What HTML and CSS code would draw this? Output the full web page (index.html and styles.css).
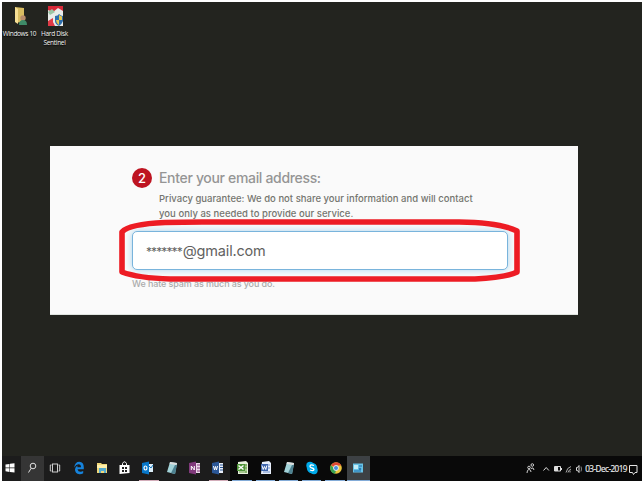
FILE: index.html
```html
<!DOCTYPE html>
<html lang="en">
<head>
<meta charset="utf-8">
<title>Desktop</title>
<link rel="stylesheet" href="styles.css">
</head>
<body>
<div class="desktop">
  <div class="shortcuts">
    <div class="shortcut"><svg width="22" height="22" viewBox="0 0 22 22"><path d="M6 2l9 1v15l-9-1z" fill="#d9bd62"/><path d="M6 2l3 2v15l-3-2z" fill="#f6df94"/><circle cx="14" cy="13" r="2.7" fill="#b98d6c"/><path d="M10 20q0-5 4-5t4 5z" fill="#3e8b68"/></svg><span class="label first">Windows 10</span></div>
    <div class="shortcut"><svg width="22" height="22" viewBox="0 0 22 22"><path d="M4 1h15v20H4z" fill="#e9ecea"/><path d="M4 1h15v5l-5-3-5 4-5-2z" fill="#d92938"/><path d="M4 7l4-3 3 3-5 3z" fill="#9cc5a6"/><path d="M4 16l5-3v4l2 4H4z" fill="#e03a46"/><path d="M11 11q3 0 4-2 2 2 4 2v5q-1 3-4 5-4-2-4-5z" fill="#2e6fae"/><path d="M15 10q2 1 3 1.500V15h-3zM12 15h3v5q-3-2-3-5z" fill="#e7c751"/></svg><span class="label">Hard Disk<br>Sentinel</span></div>
  </div>
  <main class="panel">
    <div class="step"><span class="badge">2</span><h1>Enter your email address:</h1></div>
    <p class="privacy">Privacy guarantee: We do not share your information and will contact<br><span class="line-b">you only as needed to provide our service.</span></p>
    <div class="field"><span class="value"><span class="mask">*******</span>@gmail.com</span></div>
    <p class="note">We hate spam as much as you do.</p>
    <svg class="ring" width="404" height="64" viewBox="0 0 404 64"><path d="M4 13Q11 5 47 3.500Q65 3 84 3H341Q382 3.500 399 12V53Q390 58 357 60H52Q20 59 4 53Z" fill="none" stroke="#ed1c24" stroke-width="5.600" stroke-linejoin="round"/></svg>
  </main>
  <footer class="taskbar">
    <div class="apps">
      <div class="app start"><svg width="16" height="16" viewBox="0 0 16 16"><path d="M3.500 4.500l4-.6v3.700h-4zM8 3.800l4.500-.6v4.400H8zM3.500 8.200h4v3.700l-4-.6zM8 8.200h4.500v4.400L8 12z" fill="#fff"/></svg></div>
      <div class="app search"><svg width="16" height="16" viewBox="0 0 16 16" fill="none" stroke="#e0e0e0"><circle cx="9" cy="6" r="2.800"/><path d="M7.200 8.200L4.500 12.500"/></svg></div>
      <div class="app"><svg width="16" height="16" viewBox="0 0 16 16" fill="none" stroke="#ccc"><rect x="5.500" y="4" width="5" height="8"/><path d="M4.500 5H3.300v6h1.200M11.500 5h1.200v6h-1.200"/></svg></div>
      <div class="app"><svg width="16" height="16" viewBox="0 0 16 16"><path d="M3.200 7.500Q4 1.800 8.300 1.800Q12.800 2 12.800 7.500V9.200H6.500Q7 11.700 9.500 11.700Q11 11.700 12.200 10.900V13.300Q10.500 14.300 8.500 14.200Q3.800 13.700 4 9.200Q4.300 6.600 6.700 5.600Q6.300 6.200 6.300 7.200H10Q10 4.300 7.600 4.300Q5 4.400 3.200 7.500Z" fill="#1683dc"/></svg></div>
      <div class="app"><svg width="16" height="16" viewBox="0 0 16 16"><path d="M3 3h4l1 1h5v9H3z" fill="#f0d779"/><path d="M5 8h7v5h-2v-2H7v2H5z" fill="#54abd0"/><path d="M3 5h10v3H3z" fill="#fff0ac"/></svg></div>
      <div class="app"><svg width="16" height="16" viewBox="0 0 16 16"><path d="M2.500 5h10v8l-10 1z" fill="#fff"/><path d="M5.500 6V3.500Q7.500 0 9.500 3.500V6" fill="none" stroke="#fff"/><path d="M5 7h2v2H5zm3 0h2v2H8zm-3 3h2v2H5zm3 0h2v2H8z" fill="#222"/></svg></div>
      <div class="app pink"><svg width="16" height="16" viewBox="0 0 16 16"><path d="M8 4h5v8H8z" fill="#dceef9"/><path d="M8 5l3 3 2-3" fill="none" stroke="#1976b8"/><path d="M2 3l7-1.500v13L2 13z" fill="#0877c9"/><ellipse cx="5.500" cy="8" rx="1.500" ry="2" fill="none" stroke="#fff" stroke-width="1.200"/></svg></div>
      <div class="app"><svg width="16" height="16" viewBox="0 0 16 16"><path d="M6 2l7 1-2 11-8-2z" fill="#a2d2d8"/><path d="M6 2l7 1-.4 2-7-1z" fill="#ddd"/><path d="M11 5l2 0-2 9-4-1z" fill="#4d8190"/></svg></div>
      <div class="app"><svg width="16" height="16" viewBox="0 0 16 16"><path d="M8 3h5v10H8z" fill="#ead8e9"/><path d="M10 5h3M10 8h3M10 11h3" stroke="#80397b"/><path d="M2 3l7-1.500v13L2 13z" fill="#80397b"/><path d="M4.300 10V6l3 4V6" fill="none" stroke="#fff"/></svg></div>
      <div class="app pink"><svg width="16" height="16" viewBox="0 0 16 16"><path d="M8 3h5v10H8z" fill="#e9eef8"/><path d="M10 5h3M10 7.500h3M10 10h3" stroke="#2b5797"/><path d="M2 3l7-1.500v13L2 13z" fill="#2b5797"/><path d="M3.500 6l1 4 1-3.500 1 3.500 1-4" fill="none" stroke="#fff"/></svg></div>
      <div class="app dark blue"><svg width="16" height="16" viewBox="0 0 16 16"><path d="M3 2l8-1 2 2v11H3z" fill="#e8f1dd"/><path d="M9 5h3M9 8h3M4 12h8M11 4v9" stroke="#629b42"/><path d="M2 4h8v7H2z" fill="#4e9437"/><path d="M3.500 5.500l5 4m0-4l-5 4" stroke="#fff" stroke-width="1.500"/></svg></div>
      <div class="app dark blue"><svg width="16" height="16" viewBox="0 0 16 16"><path d="M4 2l7-1 2 2v11H3z" fill="#e7eefb"/><path d="M10 5h2M10 8h2M5 12h7" stroke="#718fc9"/><path d="M3 4h7v7H3z" fill="#3e65ad"/><path d="M4 5.500l1.200 4 1.300-3 1.300 3 1-4" fill="none" stroke="#fff"/></svg></div>
      <div class="app dark blue"><svg width="16" height="16" viewBox="0 0 16 16"><path d="M6 2l7 1-2 11-8-2z" fill="#a2d2d8"/><path d="M6 2l7 1-.4 2-7-1z" fill="#ddd"/><path d="M11 5l2 0-2 9-4-1z" fill="#4d8190"/></svg></div>
      <div class="app dark blue"><svg width="16" height="16" viewBox="0 0 16 16"><circle cx="6" cy="5.500" r="3.700" fill="#00a9e8"/><circle cx="10" cy="10.500" r="3.700" fill="#00a9e8"/><circle cx="8" cy="8" r="5.200" fill="#00a9e8"/><path d="M10 5.500Q6 4 6 6.500Q6 7.500 8 8Q10 8.500 10 9.500Q9.500 11.500 6 10" fill="none" stroke="#fff" stroke-width="1.300"/></svg></div>
      <div class="app dark blue"><svg width="16" height="16" viewBox="0 0 16 16"><circle cx="8" cy="8" r="5.800" fill="#ecc63d"/><path d="M8 8L3 5.200Q5 2.200 8 2.200Q11.500 2.200 13.200 5.500H8z" fill="#df4936"/><path d="M3 5.200L8 10.500L7 13.800Q3 13 2.300 9Q2 7 3 5.200z" fill="#37a454"/><circle cx="8" cy="8" r="2.500" fill="#4a8cdc" stroke="#fff" stroke-width=".8"/></svg></div>
      <div class="app active"><svg width="16" height="16" viewBox="0 0 16 16"><path d="M3 3.500h10v9H3z" fill="#68c2e6"/><path d="M4 5h4v4H4z" fill="#c4edf8"/><path d="M9 6h3M4 11h7" stroke="#1b6dac"/><circle cx="10" cy="9" r="1.300" fill="#267db7"/></svg></div>
    </div>
    <div class="tray">
      <svg width="60" height="24" viewBox="0 0 60 24" fill="none" stroke="#ddd"><path d="M2 16q0-3.500 2-3.500t2 2.500M6 11.500q2.500-2 3 1.500" stroke="#ccc"/><circle cx="4" cy="10.500" r="1.300" stroke="#ccc"/><circle cx="7.300" cy="8" r="1.300" stroke="#ccc"/><path d="M18.500 13.500l2.700-3 2.700 3"/><path d="M29.500 9.500h6v4.500h-6zM36.500 11v2"/><path d="M30 10h3v4h-3z" fill="#ddd" stroke="none"/><path d="M41 15.500q1-5 5-6M43 15.500q0-2 3-3.500M45 15.500v-2" stroke="#aaa"/><path d="M51.500 10.500h1l1.500-2v7l-1.500-2h-1z"/><path d="M56 9.500q1 2.500 0 5" stroke="#888"/></svg>
      <time class="date">03-Dec-2019</time>
      <svg class="bell" width="11" height="14" viewBox="0 0 11 14" fill="none" stroke="#e4e4e4"><path d="M1.500 2.500h7.500v7H7l-1.500 2-1-2h-3z"/></svg>
    </div>
  </footer>
</div>
</body>
</html>
```
FILE: styles.css
```css
* { box-sizing: border-box; }
body { margin: 0; background: #fff; font-family: "Liberation Sans", Arial, sans-serif; }
.desktop { width: 640px; height: 479px; margin: 2px; background: #23241f; display: flex; flex-direction: column; }
.shortcuts { height: 144px; padding: 3px 0 0; display: flex; align-items: flex-start; }
.shortcut { width: 35px; display: flex; flex-direction: column; align-items: center; color: #f5f5f5; font: 6.500px/9px "Open Sans", sans-serif; text-align: center; white-space: nowrap; }
.shortcut svg { margin-bottom: 2px; }
.label { letter-spacing: -.3px; text-shadow: 0 1px 1px #000; }
.first { letter-spacing: -.33px; }
.panel { position: relative; width: 528px; height: 169px; margin-left: 48px; padding: 21px 70px 0 82px; background: #fafafa; border-bottom: 1px solid #dfe4df; }
.step { height: 22px; display: flex; align-items: center; gap: 7px; }
.badge { width: 20px; height: 20px; border-radius: 50%; background: #be1421; color: #fff; font: 500 13px/21px Inter, sans-serif; text-align: center; }
h1 { margin: 0; color: #959595; font: 500 14px/20px Inter, sans-serif; letter-spacing: -.33px; white-space: nowrap; }
.privacy { margin: 2px 0 0 27px; height: 40px; color: #74756f; font: 500 9.500px/15px Inter, sans-serif; letter-spacing: .01px; white-space: nowrap; }
.line-b { letter-spacing: .03px; }
.field { width: 376px; height: 39px; display: flex; align-items: center; padding: 1px 0 0 13px; background: #fff; border: 1px solid #79b4dc; border-radius: 5px; box-shadow: 0 0 7px #a9d3ed; color: #62625f; font: 400 14.500px/20px Inter, sans-serif; letter-spacing: -.18px; }
.mask { font-size: 12px; letter-spacing: -.9px; margin-right: 1px; }
.note { margin: 7px 0 0; color: #aaa; font: 500 9px/14px Inter, sans-serif; letter-spacing: -.12px; white-space: nowrap; }
.ring { position: absolute; left: 68px; top: 73px; }
.taskbar { height: 25px; margin-top: auto; background: #090909; display: flex; justify-content: space-between; }
.apps { display: flex; background: #1c1c1c; }
.app { position: relative; width: 23.270px; height: 25px; display: flex; align-items: center; justify-content: center; padding-bottom: 1px; }
.app svg { margin-right: 1px; }
.start { width: 19px; justify-content: flex-start; }
.search { background: #353535; }
.pink::after, .blue::after, .active::after { content: ""; position: absolute; left: 2px; right: 2px; bottom: 0; height: 1px; background: #84acd8; }
.pink::after { background: #d3adba; }
.dark { background: #090909; }
.dark svg { margin: 0 0 0 1px; }
.active { background: #3d4144; }
.active::after { left: 0; right: 0; }
.tray { display: flex; align-items: center; color: #eee; }
.date { font: 8.200px/12px "Open Sans", sans-serif; letter-spacing: -.55px; white-space: nowrap; -webkit-text-stroke: .15px #eee; }
.bell { margin: 2px 3px 0 1px; }
```
